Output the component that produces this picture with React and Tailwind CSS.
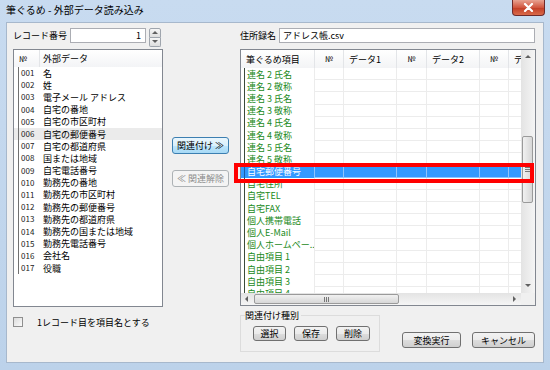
import React from 'react';

const leftItems = [
  '名', '姓', '電子メール アドレス', '自宅の番地', '自宅の市区町村', '自宅の郵便番号',
  '自宅の都道府県', '国または地域', '自宅電話番号', '勤務先の番地', '勤務先の市区町村',
  '勤務先の郵便番号', '勤務先の都道府県', '勤務先の国または地域', '勤務先電話番号', '会社名', '役職',
];

const rightItems = [
  '連名 2 氏名', '連名 2 敬称', '連名 3 氏名', '連名 3 敬称', '連名 4 氏名', '連名 4 敬称',
  '連名 5 氏名', '連名 5 敬称', '自宅郵便番号', '自宅住所', '自宅TEL', '自宅FAX', '個人携帯電話',
  '個人E-Mail', '個人ホームペー...', '自由項目 1', '自由項目 2', '自由項目 3', '自由項目 4',
];

// widths of the grid columns after the first one
const cols = [29, 53, 30, 53, 29, 30];

function Button({ children, className = '', variant = 'normal' }) {
  const look =
    variant === 'hot'
      ? 'border-[#3c7fb1] bg-[linear-gradient(#eaf6fd_0%,#d9f0fc_50%,#bee6fd_51%,#a7d9f5_100%)] text-black'
      : variant === 'disabled'
      ? 'border-[#adb2b5] bg-[#f4f4f4] text-[#8d8d8d]'
      : 'border-[#707070] bg-[linear-gradient(#f2f2f2_0%,#ebebeb_50%,#dddddd_51%,#cfcfcf_100%)] text-black';
  return (
    <div className={`flex items-center justify-center whitespace-nowrap rounded-[3px] border text-[9px] leading-none ${look} ${className}`}>
      {children}
    </div>
  );
}

function Arrow({ dir }) {
  const pts = {
    up: '1,5 4,2 7,5',
    down: '1,2 4,5 7,2',
    left: '5,1 2,4 5,7',
    right: '2,1 5,4 2,7',
  }[dir];
  return (
    <svg width="8" height="8" viewBox="0 0 8 8">
      <polygon points={pts} fill="#606060" />
    </svg>
  );
}

export default function App() {
  return (
    <div className="flex h-[370px] w-[550px] flex-col bg-[linear-gradient(#c8dbf0,#bcd2ea)] px-[6px] pb-[7px] font-['Noto_Sans_CJK_JP','Noto_Sans',sans-serif] text-black">
      {/* title bar */}
      <div className="flex h-[22px] items-start justify-between">
        <div className="pt-[4px] text-[10px] leading-[12px]">筆ぐるめ - 外部データ読み込み</div>
        <div className="mr-[-1px] flex h-[16px] w-[33px] items-center justify-center rounded-b-[4px] border border-t-0 border-[#6e2a2a] bg-[linear-gradient(#e8a291,#d1563f_50%,#c13c25_51%,#d96a4a)]">
          <svg width="11" height="9" viewBox="0 0 11 9">
            <path d="M2 1 L9 8 M9 1 L2 8" stroke="#fff" strokeWidth="2.2" strokeLinecap="round" />
          </svg>
        </div>
      </div>

      {/* client */}
      <div className="flex flex-1 border border-[#a7b8cc] bg-[#f0f0f0] pt-[5px] text-[9px] leading-none">
        {/* left column */}
        <div className="ml-[6px] flex w-[150px] flex-col">
          <div className="flex h-[15px] items-center">
            <span className="w-[57px]">レコード番号</span>
            <div className="flex h-[15px] w-[76px] items-center justify-end border border-[#abadb3] bg-white pr-[4px]">1</div>
            <div className="ml-[3px] flex h-[15px] w-[12px] flex-col">
              <div className="flex flex-1 items-center justify-center rounded-t-[2px] border border-[#9fa5ad] bg-[linear-gradient(#f6f6f6,#dedede)]">
                <Arrow dir="up" />
              </div>
              <div className="flex flex-1 items-center justify-center rounded-b-[2px] border border-t-0 border-[#9fa5ad] bg-[linear-gradient(#f6f6f6,#dedede)]">
                <Arrow dir="down" />
              </div>
            </div>
          </div>

          <div className="mt-[6px] h-[258px] overflow-hidden border border-[#828790] bg-white">
            <div className="flex h-[17px] items-center bg-[linear-gradient(#ffffff,#f3f4f6)]">
              <div className="flex h-full w-[26px] items-center border-r border-[#e3e5e8] pl-[5px] text-[8px]">№</div>
              <div className="pl-[3px]">外部データ</div>
            </div>
            {leftItems.map((name, i) => (
              <div
                key={i}
                className={`flex h-[12.2px] items-center whitespace-nowrap ${i === 5 ? 'bg-[#ebebeb]' : ''}`}
              >
                <div className="ml-[4px] flex h-full w-[25px] items-center border-l border-[#707070] pl-[2px] text-[8px] text-[#222]">
                  {String(i + 1).padStart(3, '0')}
                </div>
                <div>{name}</div>
              </div>
            ))}
          </div>

          <div className="mt-[10px] flex items-center">
            <div className="h-[10px] w-[10px] border border-[#8f8f8f] bg-[linear-gradient(135deg,#dcdcdc,#fafafa)]" />
            <span className="ml-[14px]">1レコード目を項目名とする</span>
          </div>
        </div>

        {/* middle buttons */}
        <div className="flex w-[77px] flex-col pl-[9px] pt-[109px]">
          <Button variant="hot" className="h-[17px] w-[57px]">関連付け ≫</Button>
          <Button variant="disabled" className="mt-[16px] h-[17px] w-[57px]">≪ 関連解除</Button>
        </div>

        {/* right column */}
        <div className="flex w-[296px] flex-col">
          <div className="flex h-[15px] items-center">
            <span className="w-[39px]">住所録名</span>
            <div className="flex h-[15px] w-[256px] items-center border border-[#abadb3] bg-white pl-[3px]">アドレス帳.csv</div>
          </div>

          <div className="relative mt-[6px] flex h-[257px] flex-col border border-[#828790] bg-white">
            <div className="flex min-h-0 flex-1">
              <div className="flex-1 overflow-hidden">
                {/* header */}
                <div className="flex h-[18px] items-center whitespace-nowrap bg-[linear-gradient(#ffffff,#f3f4f6)]">
                  <div className="flex h-full w-[74px] shrink-0 items-center border-r border-[#e3e5e8] pl-[5px]">筆ぐるめ項目</div>
                  {cols.map((w, j) => (
                    <div
                      key={j}
                      style={{ width: w }}
                      className={`flex h-full shrink-0 items-center overflow-hidden border-r border-[#e3e5e8] ${j % 2 === 0 ? 'justify-center text-[8px]' : 'pl-[5px]'}`}
                    >
                      {['№', 'データ1', '№', 'データ2', '№', 'デ'][j]}
                    </div>
                  ))}
                </div>
                {rightItems.map((name, i) => {
                  const sel = i === 8;
                  return (
                    <div key={i} className={`flex h-[12.2px] whitespace-nowrap ${sel ? 'bg-[#3399ff] text-white' : 'text-[#1b8a1b]'}`}>
                      <div className={`ml-[3px] flex h-full w-[71px] shrink-0 items-center overflow-hidden border-l border-r pl-[2px] ${sel ? 'border-l-[#1a5fa8] border-r-[#8fc4ff]' : 'border-l-[#3a4a3a] border-r-[#ececec]'}`}>
                        {name}
                      </div>
                      {cols.map((w, j) => (
                        <div
                          key={j}
                          style={{ width: w }}
                          className={`h-full shrink-0 border-r border-b ${sel ? 'border-[#8fc4ff]' : 'border-[#ececec]'}`}
                        />
                      ))}
                    </div>
                  );
                })}
              </div>
              {/* vertical scrollbar */}
              <div className="flex w-[14px] shrink-0 flex-col bg-[linear-gradient(90deg,#e3e3e3,#f5f5f5)]">
                <div className="flex h-[14px] items-center justify-center"><Arrow dir="up" /></div>
                <div className="relative flex-1">
                  <div className="absolute left-[1px] top-[72px] flex h-[67px] w-[11px] items-center justify-center rounded-[2px] border border-[#9a9a9a] bg-[linear-gradient(90deg,#f1f1f1,#d7d7d7)]">
                    <div className="flex flex-col gap-[1px]">
                      <div className="h-px w-[5px] bg-[#777]" />
                      <div className="h-px w-[5px] bg-[#777]" />
                      <div className="h-px w-[5px] bg-[#777]" />
                    </div>
                  </div>
                </div>
                <div className="flex h-[14px] items-center justify-center"><Arrow dir="down" /></div>
              </div>
            </div>
            {/* horizontal scrollbar */}
            <div className="flex h-[12px] shrink-0">
              <div className="relative flex flex-1 items-center bg-[linear-gradient(#e3e3e3,#f5f5f5)]">
                <div className="flex w-[12px] justify-center"><Arrow dir="left" /></div>
                <div className="ml-[1px] flex h-[10px] w-[145px] items-center justify-center rounded-[2px] border border-[#9a9a9a] bg-[linear-gradient(#f1f1f1,#d7d7d7)]">
                  <div className="flex gap-[1px]">
                    <div className="h-[5px] w-px bg-[#777]" />
                    <div className="h-[5px] w-px bg-[#777]" />
                    <div className="h-[5px] w-px bg-[#777]" />
                  </div>
                </div>
                <div className="flex-1" />
                <div className="flex w-[12px] justify-center"><Arrow dir="right" /></div>
              </div>
              <div className="w-[14px] bg-[#f0f0f0]" />
            </div>

            {/* red annotation box */}
            <div className="pointer-events-none absolute left-[-7px] top-[113px] h-[20px] w-[300px] border-[4px] border-[#ff0000]" />
          </div>

          <div className="mt-[9px] flex items-start">
            <div className="relative h-[37px] w-[140px] border border-[#dcdcdc]">
              <span className="absolute left-[4px] top-[-5px] whitespace-nowrap bg-[#f0f0f0] pr-[2px]">関連付け種別</span>
              <div className="mt-[10px] flex gap-[8px] pl-[12px]">
                <Button className="h-[15px] w-[33px]">選択</Button>
                <Button className="h-[15px] w-[34px]">保存</Button>
                <Button className="h-[15px] w-[34px]">削除</Button>
              </div>
            </div>
            <Button className="ml-[22px] mt-[17px] h-[16px] w-[59px]">変換実行</Button>
            <Button className="ml-[11px] mt-[17px] h-[16px] w-[63px]">キャンセル</Button>
          </div>
        </div>
      </div>
    </div>
  );
}
